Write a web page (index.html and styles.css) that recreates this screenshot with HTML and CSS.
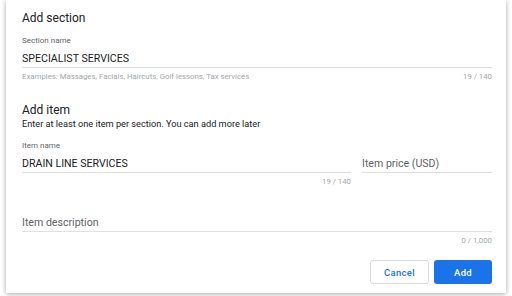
FILE: index.html
```html
<!DOCTYPE html>
<html>
<head>
<meta charset="utf-8">
<link rel="stylesheet" href="styles.css">
</head>
<body>
<div class="dialog">
  <h2 class="title">Add section</h2>
  <div class="field">
    <div class="label">Section name</div>
    <div class="input">SPECIALIST SERVICES</div>
    <div class="helper"><span>Examples: Massages, Facials, Haircuts, Golf lessons, Tax services</span><span>19 / 140</span></div>
  </div>
  <h2 class="title title-item">Add item</h2>
  <div class="subtitle">Enter at least one item per section. You can add more later</div>
  <div class="row">
    <div class="field field-name">
      <div class="label">Item name</div>
      <div class="input">DRAIN LINE SERVICES</div>
      <div class="helper helper-end"><span>19 / 140</span></div>
    </div>
    <div class="field field-price">
      <div class="label label-empty">&nbsp;</div>
      <div class="input placeholder">Item price (USD)</div>
    </div>
  </div>
  <div class="field field-desc">
    <div class="input placeholder">Item description</div>
    <div class="helper helper-end"><span>0 / 1,000</span></div>
  </div>
  <div class="actions">
    <button class="btn btn-cancel">Cancel</button>
    <button class="btn btn-add">Add</button>
  </div>
</div>
</body>
</html>
```
FILE: styles.css
```css
html, body {
  margin: 0;
  padding: 0;
  background: #ffffff;
}
body {
  width: 512px;
  height: 296px;
  overflow: hidden;
  padding: 0 6px;
  box-sizing: border-box;
  font-family: Roboto, "Liberation Sans", sans-serif;
  color: #202124;
}
.dialog {
  background: #fff;
  box-shadow: 0 1px 5px rgba(0,0,0,0.35);
  padding: 10px 14px 9px 16px;
  height: 293px;
  box-sizing: border-box;
  display: flex;
  flex-direction: column;
}
.title {
  margin: 0;
  font-size: 12px;
  font-weight: 400;
  line-height: 16px;
  color: #202124;
}
.title-item {
  margin-top: 21px;
  line-height: 15px;
}
.subtitle {
  font-size: 9.2px;
  line-height: 11px;
  color: #202124;
}
.field {
  display: flex;
  flex-direction: column;
}
.label {
  margin-top: 10px;
  font-size: 8px;
  line-height: 10px;
  color: #5f6368;
}
.input {
  margin-top: 6px;
  font-size: 10.6px;
  line-height: 14px;
  padding-bottom: 1px;
  border-bottom: 1px solid #e0e0e0;
  color: #202124;
}
.placeholder {
  color: #5f6368;
}
.helper {
  margin-top: 4px;
  display: flex;
  justify-content: space-between;
  font-size: 7.8px;
  line-height: 10px;
  color: #a4a7ab;
}
.helper-end {
  justify-content: flex-end;
}
.row {
  display: flex;
  gap: 11px;
  margin-top: 2px;
}
.field-name {
  flex: 0 0 329px;
}
.field-price {
  flex: 1;
}
.field-desc .input {
  margin-top: 29px;
}
.actions {
  margin-top: 14px;
  display: flex;
  justify-content: flex-end;
  gap: 5px;
}
.btn {
  height: 24px;
  border-radius: 3px;
  font-family: Roboto, "Liberation Sans", sans-serif;
  font-size: 9.5px;
  font-weight: 500;
  letter-spacing: 0.3px;
  padding: 0;
  cursor: pointer;
}
.btn-cancel {
  width: 59px;
  background: #fff;
  color: #1a73e8;
  border: 1px solid #dadce0;
}
.btn-add {
  width: 58px;
  background: #1a73e8;
  color: #fff;
  border: none;
}
```
